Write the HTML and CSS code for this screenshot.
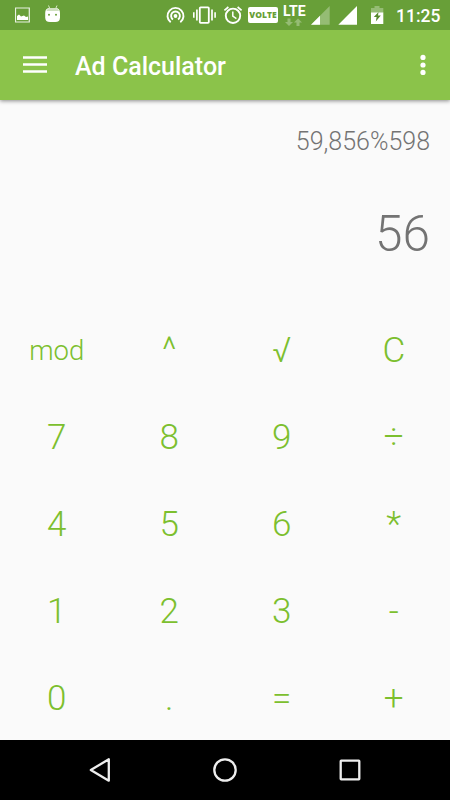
FILE: index.html
```html
<!DOCTYPE html>
<html lang="en">
<head>
<meta charset="utf-8">
<title>Ad Calculator</title>
<link rel="stylesheet" href="styles.css">
</head>
<body>
<div class="phone">
  <div class="status">
    <div class="status-group">
      <svg class="icon" width="16" height="30" viewBox="15 0 16 30"><path d="M15.5 8H29.3V22H15.5Z" fill="none" stroke="#fff" stroke-opacity=".85" stroke-width="1.2"/><path d="M17 20V16L19 14.5 21 16.5 24 15.5 26 17 28 16.5V20Z" fill="#fff"/></svg>
      <svg class="icon android" width="16" height="30" viewBox="45 0 16 30"><path d="M48.5 5.5L50 9M57 5.5L55.5 9" stroke="#d8e8c9" stroke-width="1"/><path d="M45.2 13Q45.2 8 50 8H55.3Q60 8 60 13V17.5Q60 22 55.3 22H50Q45.2 22 45.2 17.5Z" fill="#fff"/><path d="M46.3 11Q47.5 8 50 8H55.3Q58 8 59 11Z" fill="#cfe0c0"/><circle cx="49" cy="14.8" r="1" fill="#689f38"/><circle cx="56" cy="14.8" r="1" fill="#689f38"/></svg>
    </div>
    <div class="status-group">
      <svg class="icon" width="20" height="30" viewBox="166 0 20 30"><g fill="none" stroke="#fff" stroke-width="1.9"><path d="M170.7 22.3A8 8 0 1 1 180.3 22.3"/><path d="M173 19.5A4.4 4.4 0 1 1 178 19.5"/></g><circle cx="175.5" cy="16" r="1.9" fill="#fff"/></svg>
      <svg class="icon vibrate" width="24" height="30" viewBox="192 0 24 30"><rect x="199.8" y="7.3" width="9" height="15.5" rx=".8" fill="none" stroke="#fff" stroke-width="1.8"/><path d="M196.9 9.5V20.5M212 9.5V20.5" stroke="#fff" stroke-width="1.7"/><path d="M193.8 12.3V17.7M215.1 12.3V17.7" stroke="#fff" stroke-width="1.6"/></svg>
      <svg class="icon alarm" width="20" height="30" viewBox="223 0 20 30"><circle cx="233" cy="15.8" r="7.2" fill="none" stroke="#fff" stroke-width="1.9"/><path d="M224.4 10.4L228.4 7M241.6 10.4L237.6 7" stroke="#fff" stroke-width="1.7"/><path d="M232.8 11.6V16.2L236.4 18.6" fill="none" stroke="#fff" stroke-width="1.5"/></svg>
      <span class="volte">VOLTE</span>
      <span class="lte">LTE<svg width="20" height="9" viewBox="285 17 20 9"><path d="M287 21L291 25 295 21H292.5V17.5H289.5V21ZM296 21.5L300 17.5 304 21.5H301.5V25H298.5V21.5Z" fill="#95bc74"/></svg></span>
      <svg class="icon" width="20" height="30" viewBox="311 0 20 30"><path d="M311 24.7L329.7 6V24.7Z" fill="#95bc74"/><path d="M311 24.7L320 15.7V24.7Z" fill="#fff"/></svg>
      <svg class="icon signal" width="20" height="30" viewBox="338 0 20 30"><path d="M338.3 24.7L357 6V24.7Z" fill="#fff"/></svg>
      <svg class="icon battery" width="14" height="30" viewBox="370 0 14 30"><path d="M371 8H374.5V6H379.5V8H383.3V13H371Z" fill="#95bc74"/><path d="M371 12.5H383.3V24H371Z" fill="#fff"/><path d="M378.5 12L373.8 17H376.6L375.8 21.5 380.8 15.5H378Z" fill="#57892f"/></svg>
      <span class="time">11:25</span>
    </div>
  </div>
  <header class="bar">
    <svg width="24" height="18" viewBox="0 0 24 18"><path d="M0 1.5H24M0 8.5H24M0 15.5H24" stroke="#fff" stroke-width="2.6"/></svg>
    <h1>Ad Calculator</h1>
    <svg width="6" height="22" viewBox="0 0 6 22"><g fill="#fff"><circle cx="3" cy="3.4" r="2.6"/><circle cx="3" cy="11" r="2.6"/><circle cx="3" cy="18.4" r="2.6"/></g></svg>
  </header>
  <section class="display">
    <div class="expression">59,856%598</div>
    <div class="result">56</div>
  </section>
  <main class="keys">
    <button class="small">mod</button><button>^</button><button>√</button><button>C</button>
    <button>7</button><button>8</button><button>9</button><button>÷</button>
    <button>4</button><button>5</button><button>6</button><button>*</button>
    <button>1</button><button>2</button><button>3</button><button>-</button>
    <button>0</button><button>.</button><button>=</button><button>+</button>
  </main>
  <nav class="nav">
    <svg width="26" height="26" viewBox="87 757 26 26"><path d="M90.8 770L108.8 759.3V780.7Z"/></svg>
    <svg width="26" height="26" viewBox="212 757 26 26"><circle cx="225" cy="770" r="10.7"/></svg>
    <svg width="26" height="26" viewBox="337 757 26 26"><rect x="340.7" y="760.7" width="18.6" height="18.6" rx=".5"/></svg>
  </nav>
</div>
</body>
</html>
```

FILE: styles.css
```css
* { box-sizing: border-box; }
body { margin: 0; font-family: Roboto, "Liberation Sans", sans-serif; }
svg { display: block; flex: none; }
.phone { width: 450px; height: 800px; display: flex; flex-direction: column; background: #fafafa; overflow: hidden; }
.status { position: relative; z-index: 1; height: 30px; flex: none; background: #689f38; display: flex; justify-content: space-between; padding: 0 10px 0 15px; color: #fff; }
.status-group { display: flex; align-items: center; }
.android { margin-left: 14px; }
.vibrate { margin-left: 6px; }
.alarm { margin-left: 7px; }
.volte { width: 30px; height: 16px; margin-left: 5px; border-radius: 2px; background: #fff; color: #689f38; font: 800 8.5px/16px "Open Sans", sans-serif; text-align: center; white-space: nowrap; }
.lte { width: 24px; height: 22px; margin: 0 4px 0 5px; padding-top: 1px; font-size: 14px; font-weight: 700; line-height: 13px; }
.signal { margin-left: 7px; }
.battery { margin-left: 12px; }
.time { width: 44px; margin-left: 12px; padding-top: 1px; font-size: 17.5px; font-weight: 500; line-height: 30px; white-space: nowrap; }
.bar { height: 70px; flex: none; display: flex; align-items: center; padding: 0 24px 0 23px; background: #8bc34a; color: #fff; box-shadow: 0 1px 4px rgba(0, 0, 0, .45); }
.bar h1 { flex: 1; margin: 3px 0 0 28px; font-size: 25px; font-weight: 500; line-height: 30px; }
.display { height: 208px; flex: none; padding: 27px 20px 0 0; text-align: right; color: #737373; font-weight: 300; }
.expression { font-size: 25px; line-height: 30px; }
.result { margin-top: 47px; font-size: 49.5px; line-height: 60px; }
.keys { flex: none; display: grid; grid-template-columns: repeat(4, 112.5px); grid-template-rows: repeat(5, 86.8px); height: 432px; }
.keys button { padding: 0 0 0 1px; border: 0; background: none; color: #7cbf2e; font: 300 35px/42px Roboto, sans-serif; }
.keys button:nth-child(4n) { padding-left: 0; }
.keys .small { font-size: 27.5px; }
.nav { position: relative; height: 60px; flex: none; background: #000; display: flex; align-items: center; justify-content: space-between; padding: 0 87px; }
.nav svg { fill: none; stroke: #eee; stroke-width: 2.3; stroke-linejoin: round; }
```
